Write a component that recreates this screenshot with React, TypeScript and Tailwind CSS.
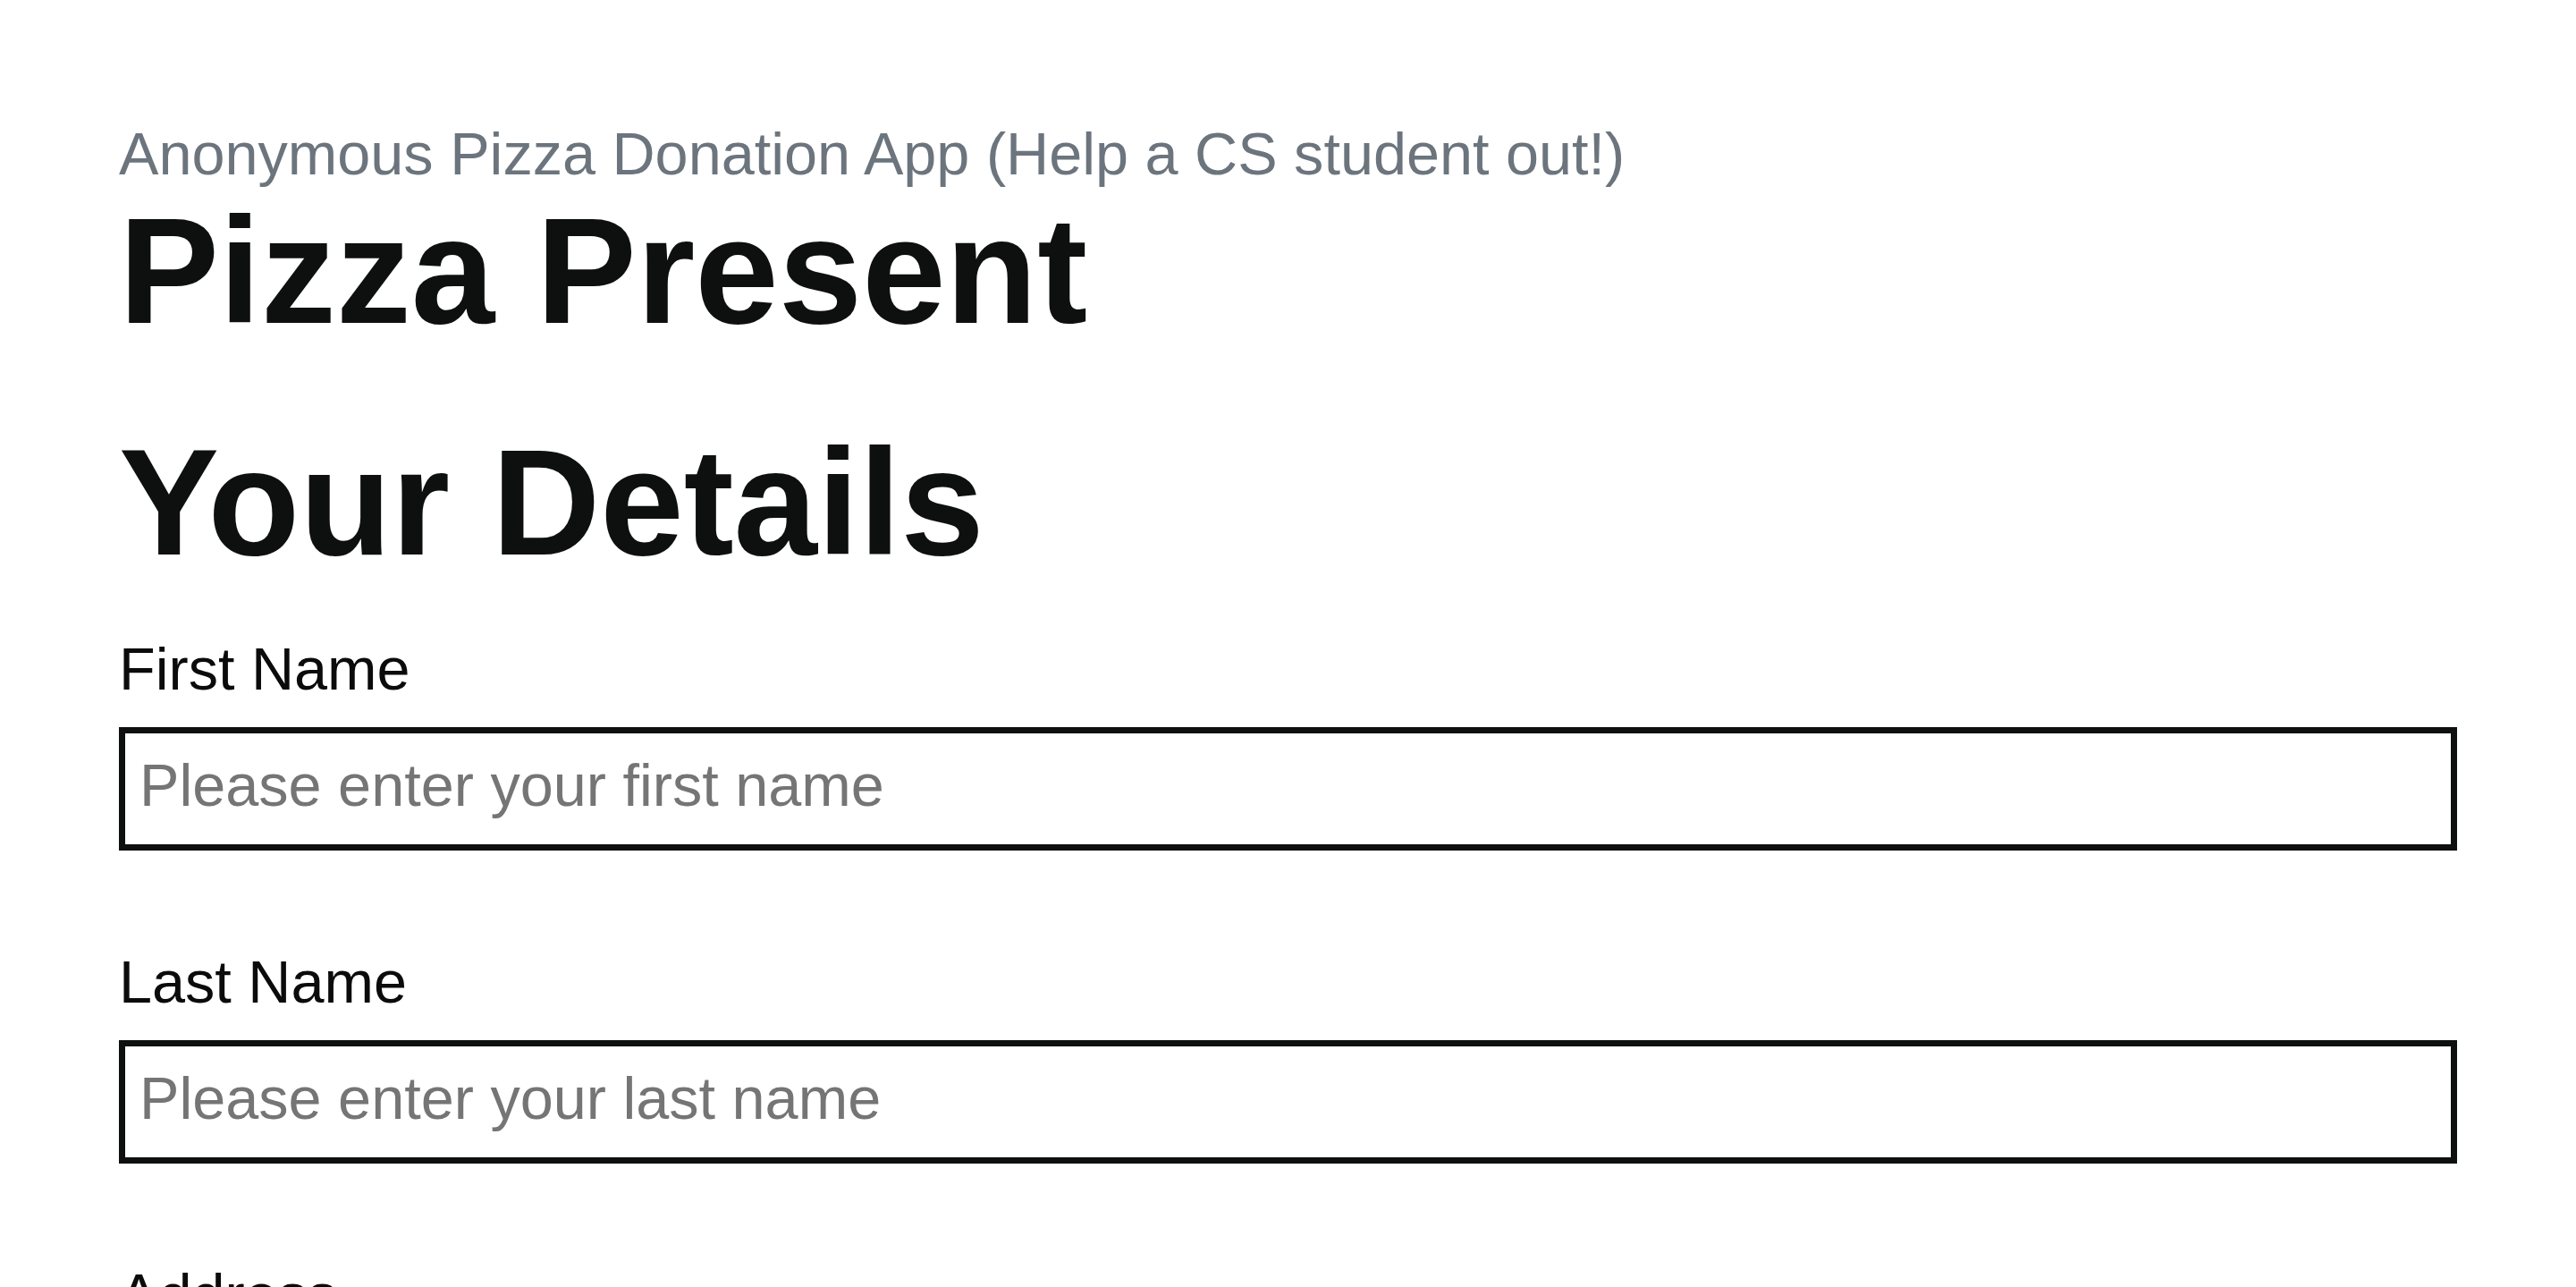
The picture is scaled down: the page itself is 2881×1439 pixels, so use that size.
import React from "react";

function Field({ label, placeholder, id }: { label: string; placeholder: string; id: string }) {
  return (
    <div className="flex flex-col">
      <label htmlFor={id} className="text-[66.6px] leading-[79px] text-[#0b0b0b]">
        {label}
      </label>
      <input
        id={id}
        type="text"
        placeholder={placeholder}
        className="mt-[25px] w-full border-[7px] border-[#0e100f] bg-white pl-[16px] pr-[16px] pt-[21px] pb-[29px] text-[66.6px] leading-[74px] text-black outline-none placeholder:text-[#757575]"
      />
    </div>
  );
}

export default function App() {
  return (
    <div className="min-h-screen bg-white font-['Liberation_Sans',Arial,sans-serif]">
      <div className="flex flex-col px-[133px] pt-[133px]">
        <p className="text-[66.6px] leading-[79px] text-[#6c757d]">
          Anonymous Pizza Donation App (Help a CS student out!)
        </p>
        <h1 className="text-[168px] font-bold leading-[182px] text-[#0e100f]">Pizza Present</h1>
        <h2 className="mt-[77px] text-[168px] font-bold leading-[182px] text-[#0e100f]">Your Details</h2>
        <form className="mt-[56px] flex flex-col gap-[108px] pb-[133px]">
          <Field id="first" label="First Name" placeholder="Please enter your first name" />
          <Field id="last" label="Last Name" placeholder="Please enter your last name" />
          <Field id="address" label="Address" placeholder="Please enter your address" />
        </form>
      </div>
    </div>
  );
}
